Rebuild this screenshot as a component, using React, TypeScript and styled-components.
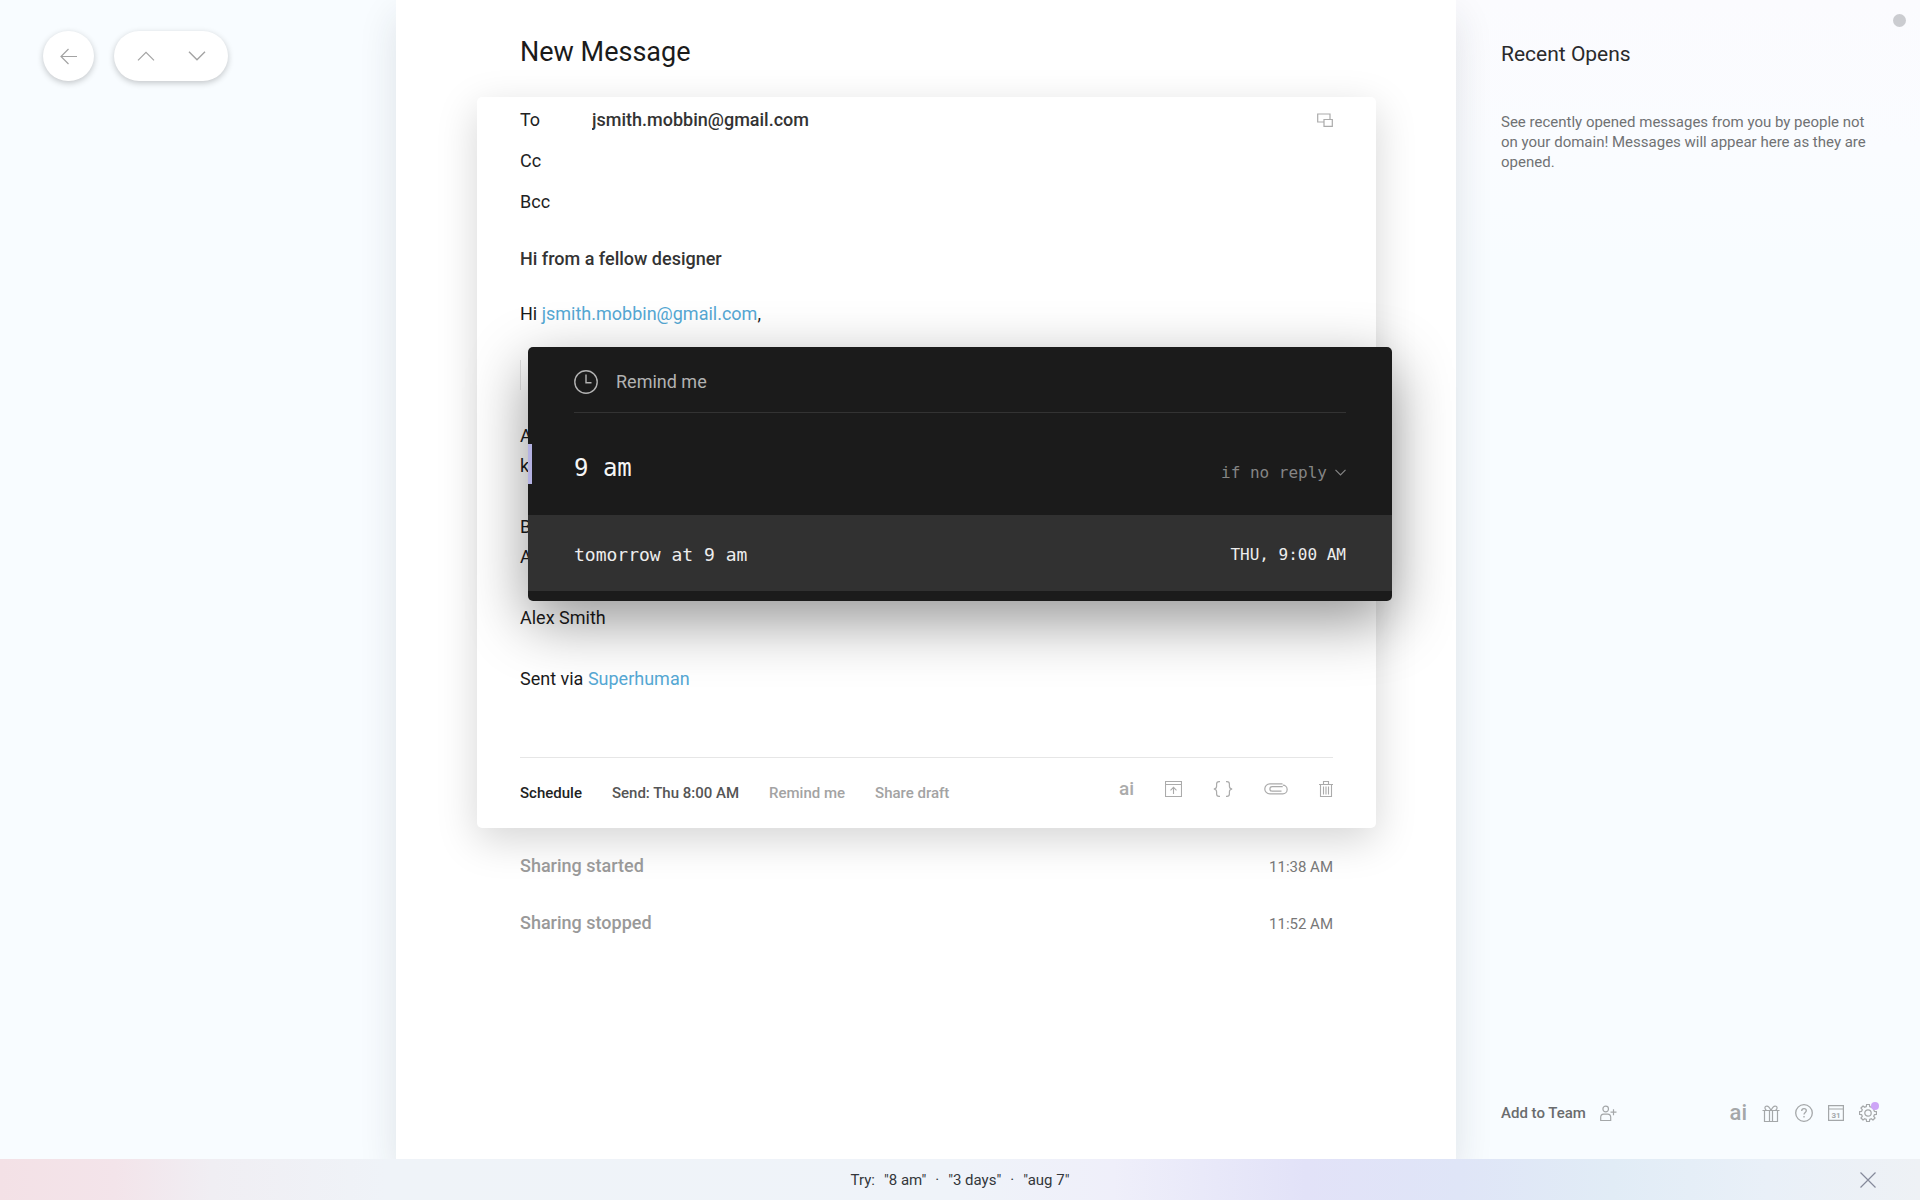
import React from "react";
import styled, { createGlobalStyle } from "styled-components";

const sans = `Roboto, "Liberation Sans", Arial, sans-serif`;
const mono = `"DejaVu Sans Mono", "Liberation Mono", monospace`;

const GlobalStyle = createGlobalStyle`
  *, *::before, *::after { box-sizing: border-box; }
  body { margin: 0; background: #f8fcff; font-family: ${sans}; color: #1b1b1b; }
  h1, h2, p, ul, blockquote { margin: 0; padding: 0; }
  button, input, select { font: inherit; color: inherit; border: 0; padding: 0; background: none; outline: none; }
  button { cursor: pointer; }
`;

const Page = styled.div`
  display: grid;
  grid-template-rows: 1fr auto;
  min-height: 100vh;
`;

const Columns = styled.div`
  display: grid;
  grid-template-columns: minmax(250px, 396px) minmax(0, 1fr) minmax(300px, 464px);
`;

const NavColumn = styled.nav`
  display: flex;
  align-items: flex-start;
  gap: 20px;
  padding: 31px 43px;
`;

const NavPill = styled.div<{ $wide?: boolean }>`
  display: flex;
  padding: 0 ${(p) => (p.$wide ? 6 : 0)}px;
  background: #fff;
  border-radius: 26px;
  box-shadow: 0 2px 6px rgba(0, 0, 0, 0.22);
`;

const NavButton = styled.button`
  display: grid;
  place-items: center;
  width: 51px;
  height: 50px;
  color: #a3a3a3;
`;

const Sheet = styled.main`
  position: relative;
  z-index: 1;
  background: #fff;
  padding: 32px 80px 0 81px;
  box-shadow: 0 16px 36px rgba(30, 40, 60, 0.12);
  clip-path: inset(0 -60px 0 -60px);
`;

const Title = styled.h1`
  padding: 0 43px;
  font-size: 27px;
  line-height: 40px;
  font-weight: 400;
  margin-bottom: 25px;
`;

const Card = styled.form`
  background: #fff;
  border-radius: 5px;
  padding: 2px 43px 0;
  box-shadow: 0 12px 40px rgba(0, 0, 0, 0.17);
`;

const FieldRow = styled.div`
  display: flex;
  align-items: center;
  height: 41px;
  font-size: 18px;
  font-weight: 500;
  color: #333;
`;

const FieldLabel = styled.label`
  width: 72px;
  font-weight: 400;
  color: #222;
`;

const FieldInput = styled.input`
  flex: 1;
  min-width: 0;
  height: 30px;
`;

const IconButton = styled.button`
  display: grid;
  place-items: center;
  color: #ababab;
`;

const SubjectInput = styled.input`
  display: block;
  width: 100%;
  height: 30px;
  margin-top: 21px;
  font-size: 18px;
  font-weight: 500;
  color: #333;
`;

const Body = styled.div`
  display: flex;
  flex-direction: column;
  gap: 31px;
  padding: 26px 0 63px;
  font-size: 18px;
  line-height: 30px;
`;

const Quote = styled.blockquote`
  height: 30px;
  border-left: 1px solid #e4e4e4;
`;

const Link = styled.a`
  color: #55a8d4;
  text-decoration: none;
`;

const CardFooter = styled.footer`
  display: flex;
  justify-content: space-between;
  align-items: center;
  height: 71px;
  border-top: 1px solid #e6e6e6;
`;

const Actions = styled.div`
  display: flex;
  align-items: center;
  gap: 30px;
`;

const Action = styled.button<{ $color: string }>`
  font-size: 15px;
  line-height: 20px;
  font-weight: 500;
  color: ${(p) => p.$color};
`;

const Tools = styled.div`
  display: flex;
  align-items: center;
  gap: 31px;
  padding-bottom: 8px;
`;

const AiMark = styled.span<{ $size: number }>`
  font-size: ${(p) => p.$size}px;
  line-height: 20px;
  font-weight: 500;
`;

const EventList = styled.ul`
  list-style: none;
  padding: 20px 43px;
`;

const EventRow = styled.li`
  display: flex;
  align-items: baseline;
  justify-content: space-between;
  margin-bottom: 20px;
  font-size: 18px;
  line-height: 36px;
  font-weight: 500;
  color: #999;
`;

const EventTime = styled.time`
  font-size: 15px;
  font-weight: 400;
  color: #777;
`;

const Sidebar = styled.aside`
  position: relative;
  display: flex;
  flex-direction: column;
  padding: 40px 43px 34px 45px;
  background: linear-gradient(#fbfbfe, #fafcff 150px, #f8fcff 260px);
`;

const StatusDot = styled.span`
  position: absolute;
  top: 14px;
  right: 14px;
  width: 13px;
  height: 13px;
  border-radius: 50%;
  background: #cbccd0;
`;

const SideTitle = styled.h2`
  font-size: 21px;
  line-height: 28px;
  font-weight: 400;
  color: #2a2a2c;
`;

const SideText = styled.p`
  margin-top: 44px;
  font-size: 15px;
  line-height: 20px;
  color: #707274;
`;

const SideFooter = styled.div`
  display: flex;
  align-items: center;
  justify-content: space-between;
  margin-top: auto;
  height: 24px;
`;

const AddTeam = styled.button`
  display: flex;
  align-items: center;
  gap: 14px;
  font-size: 15px;
  font-weight: 500;
  color: #6a6c6e;

  svg {
    color: #a4a7a9;
  }
`;

const SideTools = styled.div`
  display: flex;
  align-items: center;
  gap: 15px;
`;

const SideTool = styled(IconButton)`
  position: relative;
  color: #a4a7a9;
`;

const Badge = styled.span`
  position: absolute;
  top: -2px;
  right: -2px;
  width: 8px;
  height: 8px;
  border-radius: 50%;
  background: #cda5f7;
`;

const HintBar = styled.footer`
  position: relative;
  z-index: 2;
  display: grid;
  grid-template-columns: 1fr auto 1fr;
  align-items: center;
  height: 41px;
  padding: 0 44px;
  font-size: 15px;
  color: #33373b;
  background: linear-gradient(
    90deg,
    #f3e1e6 0%,
    #f3e4ea 6%,
    #f0eef3 11%,
    #eff3f8 20%,
    #eff3f9 50%,
    #efeffa 58%,
    #e2e2f8 68%,
    #dfe5f7 76%,
    #e1ecf6 84%,
    #e9f0f8 92%,
    #eef1f5 100%
  );
`;

const Hints = styled.div`
  grid-column: 2;
  display: flex;
  gap: 9px;
`;

const CloseButton = styled(IconButton)`
  justify-self: end;
  color: #85899a;
`;

const Overlay = styled.div`
  position: absolute;
  inset: 0;
  z-index: 3;
  display: flex;
  justify-content: center;
  align-items: flex-start;
  padding-top: 347px;
  pointer-events: none;
`;

const Dialog = styled.section`
  position: relative;
  width: min(864px, 100%);
  padding-bottom: 10px;
  border-radius: 5px;
  background: #1b1b1b;
  color: #f3f3f3;
  box-shadow: 0 20px 60px rgba(0, 0, 0, 0.42);
  pointer-events: auto;
`;

const Accent = styled.span`
  position: absolute;
  left: 0;
  top: 97px;
  width: 4px;
  height: 40px;
  background: #b4b2e2;
`;

const DialogHeader = styled.header`
  display: flex;
  align-items: center;
  gap: 18px;
  height: 66px;
  margin: 0 46px;
  padding-top: 5px;
  border-bottom: 1px solid #333;
  color: #b2b2b2;
`;

const DialogTitle = styled.h2`
  font-size: 18px;
  line-height: 24px;
  font-weight: 400;
`;

const QueryRow = styled.div`
  display: flex;
  align-items: center;
  height: 102px;
  padding: 8px 46px 0;
  font-family: ${mono};
`;

const QueryInput = styled.input`
  flex: 1;
  min-width: 0;
  font-size: 24px;
  color: #f5f5f5;
`;

const Condition = styled.label`
  display: flex;
  align-items: center;
  gap: 8px;
  margin-top: 8px;
  color: #858585;
`;

const ConditionSelect = styled.select`
  appearance: none;
  font-size: 16px;
`;

const Suggestion = styled.button`
  display: flex;
  align-items: center;
  justify-content: space-between;
  width: 100%;
  height: 76px;
  padding: 3px 46px 0;
  background: #313131;
  font-family: ${mono};
  font-size: 18px;
  color: #ededed;
`;

const SuggestionTime = styled.span`
  font-size: 16px;
`;

type IconProps = { w: number; h: number; sw?: number; children: React.ReactNode };
const Icon = ({ w, h, sw = 1, children }: IconProps) => (
  <svg
    width={w}
    height={h}
    viewBox={`0 0 ${w} ${h}`}
    fill="none"
    stroke="currentColor"
    strokeWidth={sw}
    aria-hidden="true"
  >
    {children}
  </svg>
);

const gearPath = (() => {
  const parts: string[] = [];
  const teeth = 8;
  for (let i = 0; i < teeth; i++) {
    const base = (i / teeth) * Math.PI * 2;
    [
      [-0.26, 6.6],
      [-0.17, 8.6],
      [0.17, 8.6],
      [0.26, 6.6],
    ].forEach(([a, r]) => {
      const x = 9 + Math.sin(base + a) * r;
      const y = 9 - Math.cos(base + a) * r;
      parts.push(`${parts.length ? "L" : "M"}${x.toFixed(2)} ${y.toFixed(2)}`);
    });
  }
  return parts.join("") + "Z";
})();

const BackIcon = () => (
  <Icon w={17} h={17} sw={1.2}>
    <path d="M17 8.5H1M8.5 1 1 8.5 8.5 16" />
  </Icon>
);
const UpIcon = () => (
  <Icon w={18} h={10} sw={1.2}>
    <path d="M1 9.3 9 1.3l8 8" />
  </Icon>
);
const DownIcon = () => (
  <Icon w={18} h={10} sw={1.4}>
    <path d="M1 .7l8 8 8-8" />
  </Icon>
);
const PopOutIcon = () => (
  <Icon w={16} h={14} sw={1.2}>
    <path d="M7 9H.7V1H13v5M7 6.500h8.300V13.300H7z" />
  </Icon>
);
const ClockIcon = () => (
  <Icon w={24} h={24} sw={1.4}>
    <circle cx="12" cy="12" r="11.2" />
    <path d="M12 4.500v8.300h5.500" />
  </Icon>
);
const ChevronIcon = () => (
  <Icon w={11} h={7} sw={1.2}>
    <path d="M.5.8l5 5 5-5" />
  </Icon>
);
const SnippetIcon = () => (
  <Icon w={17} h={16} sw={1.1}>
    <path d="M.5.5h16v15H.5zM.5 3.500h16M8.500 13V6.500M5.500 9.300l3-3 3 3" />
  </Icon>
);
const BracesIcon = () => (
  <Icon w={20} h={16} sw={1.2}>
    <path d="M7 .6H6C4 .6 3.600 1.600 3.600 3v2.200C3.600 7 2.800 7.800.8 8c2 .2 2.800 1 2.800 2.800V13c0 1.400.4 2.400 2.400 2.400h1M13 .6h1c2 0 2.400 1 2.400 2.400v2.200c0 1.800.8 2.600 2.800 2.800-2 .2-2.800 1-2.800 2.800V13c0 1.400-.4 2.400-2.400 2.400h-1" />
  </Icon>
);
const ClipIcon = () => (
  <Icon w={24} h={12} sw={1.2}>
    <path d="M17.500 8.200H8.200a2.300 2.300 0 0 1 0-4.600h10.500M18.500.9H5.800a5 5 0 0 0 0 10h13a4.300 4.300 0 0 0 0-8.700" />
  </Icon>
);
const TrashIcon = () => (
  <Icon w={14} h={16} sw={1.1}>
    <path d="M0 3.500h14M1.500 3.500v12h11v-12M4.500 3V.5h5V3M4.500 5.500v8M7 5.500v8M9.500 5.500v8" />
  </Icon>
);
const PersonIcon = () => (
  <Icon w={17} h={17} sw={1.2}>
    <circle cx="5.700" cy="4" r="2.800" />
    <path d="M.7 15.500v-3.200c0-2 1.200-3.200 3-3.200h4c1.800 0 3 1.200 3 3.200v3.200zM10.500 7.200h6M13.500 4.200v6" />
  </Icon>
);
const GiftIcon = () => (
  <Icon w={18} h={17} sw={1.2}>
    <path d="M.5 5.500h17M2.500 5.500v11h13v-11M7.500 5.500v11M10.500 5.500v11M9 5.500C7.500 2 5.500.6 4 1.200S2.500 4 4.500 5.500M9 5.500c1.500-3.500 3.500-4.900 5-4.300s1.500 2.800-.5 4.300" />
  </Icon>
);
const HelpIcon = () => (
  <Icon w={18} h={18} sw={1.3}>
    <circle cx="9" cy="9" r="8.300" />
    <path d="M6.700 7c0-1.400 1-2.300 2.300-2.300s2.300.9 2.300 2.100c0 1.600-2.300 1.700-2.300 3.700M9 12v1.400" />
  </Icon>
);
const CalendarIcon = () => (
  <Icon w={16} h={16} sw={1.2}>
    <path d="M.6.600h14.800v14.800H.6zM.6 4h14.800" />
    <text
      x="8"
      y="12.500"
      textAnchor="middle"
      fontFamily="Roboto, sans-serif"
      fontSize="8"
      fontWeight="700"
      fill="currentColor"
      stroke="none"
    >
      31
    </text>
  </Icon>
);
const GearIcon = () => (
  <Icon w={18} h={18} sw={1.2}>
    <path d={gearPath} strokeLinejoin="round" />
    <circle cx="9" cy="9" r="3.200" />
  </Icon>
);
const CloseIcon = () => (
  <Icon w={16} h={16} sw={1.2}>
    <path d="M.5.5l15 15M15.500.5l-15 15" />
  </Icon>
);

const recipients = [
  { id: "to", label: "To", value: "jsmith.mobbin@gmail.com" },
  { id: "cc", label: "Cc", value: "" },
  { id: "bcc", label: "Bcc", value: "" },
];

const actions = [
  { label: "Schedule", color: "#222" },
  { label: "Send: Thu 8:00 AM", color: "#555" },
  { label: "Remind me", color: "#a3a3a3" },
  { label: "Share draft", color: "#a3a3a3" },
];

const events = [
  { label: "Sharing started", time: "11:38 AM" },
  { label: "Sharing stopped", time: "11:52 AM" },
];

export default function App() {
  return (
    <>
      <GlobalStyle />
      <Page>
        <Columns>
          <NavColumn>
            <NavPill>
              <NavButton aria-label="Back"><BackIcon /></NavButton>
            </NavPill>
            <NavPill $wide>
              <NavButton aria-label="Previous"><UpIcon /></NavButton>
              <NavButton aria-label="Next"><DownIcon /></NavButton>
            </NavPill>
          </NavColumn>

          <Sheet>
            <Title>New Message</Title>
            <Card onSubmit={(e) => e.preventDefault()}>
              {recipients.map((r) => (
                <FieldRow key={r.id}>
                  <FieldLabel htmlFor={r.id}>{r.label}</FieldLabel>
                  <FieldInput id={r.id} defaultValue={r.value} />
                  {r.id === "to" && (
                    <IconButton type="button" aria-label="Pop out"><PopOutIcon /></IconButton>
                  )}
                </FieldRow>
              ))}
              <SubjectInput aria-label="Subject" defaultValue="Hi from a fellow designer" />
              <Body>
                <p>
                  Hi <Link href="#">jsmith.mobbin@gmail.com</Link>,
                </p>
                <Quote />
                <p>A<br />k</p>
                <p>B<br />A</p>
                <p>Alex Smith</p>
                <p>
                  Sent via <Link href="#">Superhuman</Link>
                </p>
              </Body>
              <CardFooter>
                <Actions>
                  {actions.map((a) => (
                    <Action type="button" key={a.label} $color={a.color}>{a.label}</Action>
                  ))}
                </Actions>
                <Tools>
                  <IconButton type="button"><AiMark $size={19}>ai</AiMark></IconButton>
                  <IconButton type="button" aria-label="Snippet"><SnippetIcon /></IconButton>
                  <IconButton type="button" aria-label="Variables"><BracesIcon /></IconButton>
                  <IconButton type="button" aria-label="Attach"><ClipIcon /></IconButton>
                  <IconButton type="button" aria-label="Discard"><TrashIcon /></IconButton>
                </Tools>
              </CardFooter>
            </Card>
            <EventList>
              {events.map((e) => (
                <EventRow key={e.time}>
                  {e.label}
                  <EventTime>{e.time}</EventTime>
                </EventRow>
              ))}
            </EventList>
          </Sheet>

          <Sidebar>
            <StatusDot />
            <SideTitle>Recent Opens</SideTitle>
            <SideText>
              See recently opened messages from you by people not on your domain! Messages will
              appear here as they are opened.
            </SideText>
            <SideFooter>
              <AddTeam>
                Add to Team
                <PersonIcon />
              </AddTeam>
              <SideTools>
                <SideTool><AiMark $size={22}>ai</AiMark></SideTool>
                <SideTool aria-label="Gifts"><GiftIcon /></SideTool>
                <SideTool aria-label="Help"><HelpIcon /></SideTool>
                <SideTool aria-label="Calendar"><CalendarIcon /></SideTool>
                <SideTool aria-label="Settings">
                  <GearIcon />
                  <Badge />
                </SideTool>
              </SideTools>
            </SideFooter>
          </Sidebar>
        </Columns>

        <HintBar>
          <Hints>
            <span>Try:</span>
            <span>"8 am"</span>
            <span>·</span>
            <span>"3 days"</span>
            <span>·</span>
            <span>"aug 7"</span>
          </Hints>
          <CloseButton aria-label="Close"><CloseIcon /></CloseButton>
        </HintBar>
      </Page>

      <Overlay>
        <Dialog role="dialog" aria-labelledby="remind-title">
          <Accent />
          <DialogHeader>
            <ClockIcon />
            <DialogTitle id="remind-title">Remind me</DialogTitle>
          </DialogHeader>
          <QueryRow>
            <QueryInput aria-label="Reminder time" defaultValue="9 am" />
            <Condition>
              <ConditionSelect aria-label="Condition">
                <option>if no reply</option>
              </ConditionSelect>
              <ChevronIcon />
            </Condition>
          </QueryRow>
          <Suggestion>
            tomorrow at 9 am
            <SuggestionTime>THU, 9:00 AM</SuggestionTime>
          </Suggestion>
        </Dialog>
      </Overlay>
    </>
  );
}
